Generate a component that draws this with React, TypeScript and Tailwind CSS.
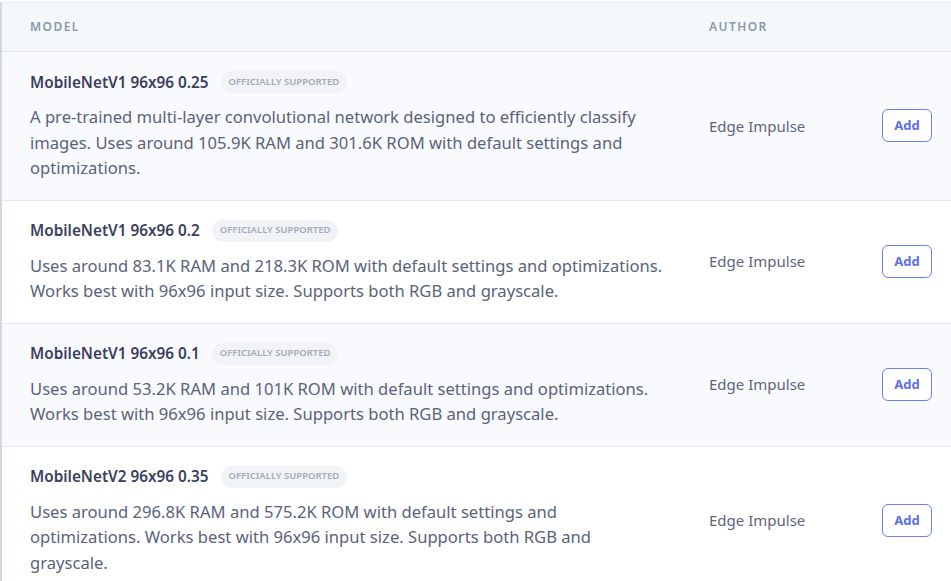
import React from 'react';

const models = [
  {
    name: 'MobileNetV1 96x96 0.25',
    desc: 'A pre-trained multi-layer convolutional network designed to efficiently classify images. Uses around 105.9K RAM and 301.6K ROM with default settings and optimizations.',
  },
  {
    name: 'MobileNetV1 96x96 0.2',
    desc: 'Uses around 83.1K RAM and 218.3K ROM with default settings and optimizations. Works best with 96x96 input size. Supports both RGB and grayscale.',
  },
  {
    name: 'MobileNetV1 96x96 0.1',
    desc: 'Uses around 53.2K RAM and 101K ROM with default settings and optimizations. Works best with 96x96 input size. Supports both RGB and grayscale.',
  },
  {
    name: 'MobileNetV2 96x96 0.35',
    desc: 'Uses around 296.8K RAM and 575.2K ROM with default settings and optimizations. Works best with 96x96 input size. Supports both RGB and grayscale.',
  },
];

const App = () => {
  return (
    <div className="w-[951px] h-[581px] overflow-hidden bg-white font-['Noto_Sans',sans-serif] pt-[2px]">
      <div className="border-l-2 border-[#d3d7df] border-t border-t-[#e6e9ee]">
        <div className="grid grid-cols-[707px_173px_1fr] h-[49px] items-center bg-[#f5f8fb] border-b border-[#e3e7ed]">
          <div className="pl-[28px] text-[12px] font-semibold tracking-[0.12em] text-[#8d97a8]">MODEL</div>
          <div className="text-[12px] font-semibold tracking-[0.12em] text-[#8d97a8]">AUTHOR</div>
          <div />
        </div>

        {models.map((m, i) => (
          <div
            key={m.name}
            className={`grid grid-cols-[707px_173px_1fr] items-center border-b border-[#e6e9ef] ${
              i % 2 === 0 ? 'bg-[#f9fafd]' : 'bg-white'
            }`}
          >
            <div className="pl-[28px] pr-[42px] pt-[19px] pb-[19px]">
              <div className="flex items-center gap-3 h-[22px]">
                <span className="text-[15.3px] font-semibold text-[#3b3f5c]">{m.name}</span>
                <span className="h-[22px] px-[8px] flex items-center rounded-full bg-[#f1f3f6] text-[9.5px] font-semibold text-[#a3abba] uppercase">
                  Officially supported
                </span>
              </div>
              <p className="mt-[11px] text-[16.6px] leading-[25.5px] text-[#5a6379]">{m.desc}</p>
            </div>
            <div className="text-[15px] text-[#5d667a]">Edge Impulse</div>
            <div>
              <button className="w-[50px] h-[33px] rounded-[6px] border-[1.5px] border-[#6c81f0] bg-white text-[13px] font-bold text-[#5d71e2]">
                Add
              </button>
            </div>
          </div>
        ))}
      </div>
    </div>
  );
};

export default App;
